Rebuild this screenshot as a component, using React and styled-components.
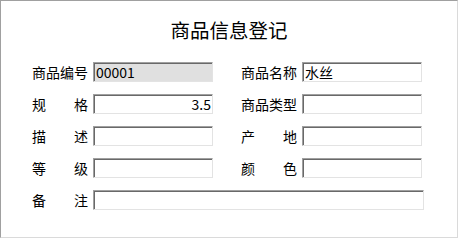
import React from 'react';
import styled, { createGlobalStyle } from 'styled-components';

const GlobalStyle = createGlobalStyle`
	body {
		margin: 0;
		background: #ffffff;
		font-family: 'Noto Sans CJK SC', 'Liberation Sans', sans-serif;
	}
`;

const Frame = styled.div`
	box-sizing: border-box;
	width: 458px;
	height: 238px;
	border: 1px solid;
	border-color: #a0a0a0 #dadada #dadada #a0a0a0;
	background: #ffffff;
	padding: 17px 0 0 31px;
`;

const Title = styled.h1`
	margin: 0 0 20px -31px;
	font-size: 19.5px;
	line-height: 24px;
	font-weight: normal;
	text-align: center;
	color: #000;
`;

const Form = styled.div`
	display: grid;
	grid-template-columns: 61px 120px 28px 61px 122px;
	grid-auto-rows: 20px;
	row-gap: 12px;
	align-items: center;
`;

const Label = styled.div`
	grid-column: ${(p) => p.col};
	display: flex;
	justify-content: space-between;
	width: 56px;
	font-size: 14px;
	line-height: 20px;
	color: #000;
`;

const Field = styled.input`
	grid-column: ${(p) => p.span || 'auto'};
	box-sizing: border-box;
	width: ${(p) => (p.wide ? '331px' : '120px')};
	height: 20px;
	margin: 0;
	padding: 0 1px 0 2px;
	border: 1px solid;
	border-color: #a0a0a0 #e3e3e3 #e3e3e3 #a0a0a0;
	box-shadow: inset 1px 1px 0 #696969;
	border-radius: 0;
	outline: none;
	background: ${(p) => (p.disabledLook ? '#e0e0e0' : '#ffffff')};
	font-family: 'Noto Sans CJK SC', 'Liberation Sans', sans-serif;
	font-size: 14px;
	color: #000;
	text-align: ${(p) => (p.right ? 'right' : 'left')};
`;

const Gap = styled.div``;

function Caption({ text, col }) {
	const chars = text.split('');
	return (
		<Label col={col}>
			{chars.map((c, i) => (
				<span key={i}>{c}</span>
			))}
		</Label>
	);
}

export default function App() {
	return (
		<>
			<GlobalStyle />
			<Frame>
				<Title>商品信息登记</Title>
				<Form>
					<Caption text='商品编号' col={1} />
					<Field defaultValue='00001' disabledLook readOnly />
					<Gap />
					<Caption text='商品名称' col={4} />
					<Field defaultValue='水丝' />

					<Caption text='规格' col={1} />
					<Field defaultValue='3.5' right />
					<Gap />
					<Caption text='商品类型' col={4} />
					<Field />

					<Caption text='描述' col={1} />
					<Field />
					<Gap />
					<Caption text='产地' col={4} />
					<Field />

					<Caption text='等级' col={1} />
					<Field />
					<Gap />
					<Caption text='颜色' col={4} />
					<Field />

					<Caption text='备注' col={1} />
					<Field span='2 / 6' wide />
				</Form>
			</Frame>
		</>
	);
}
